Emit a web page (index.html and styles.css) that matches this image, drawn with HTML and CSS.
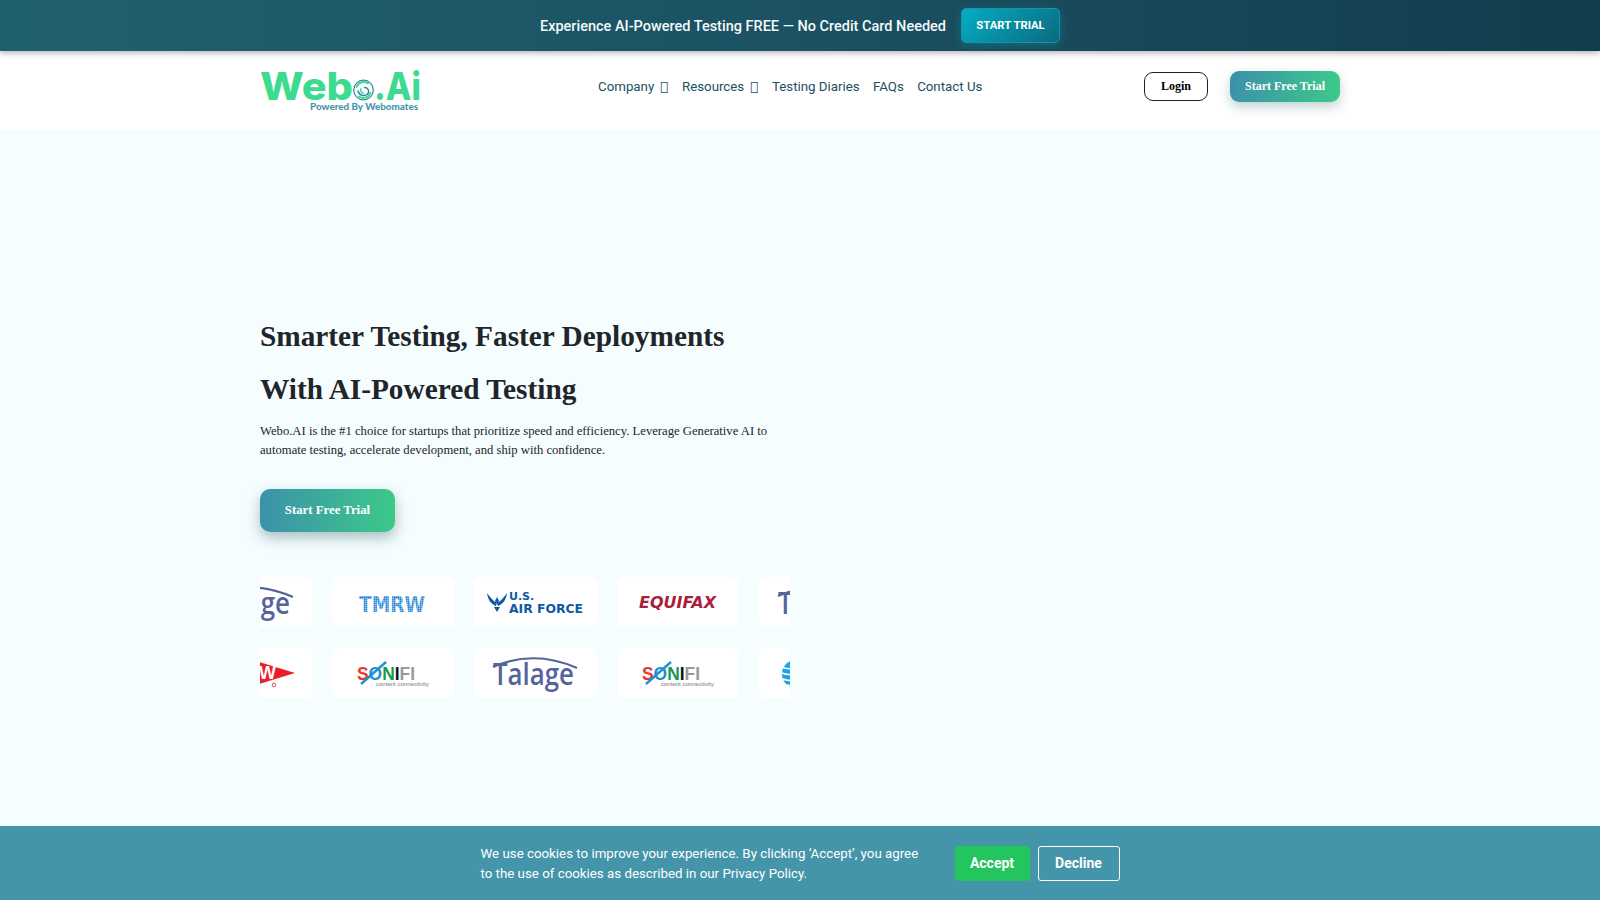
FILE: index.html
```html
<!DOCTYPE html>
<html lang="en">
<head>
<meta charset="utf-8">
<title>Webo.AI</title>
<link rel="stylesheet" href="styles.css">
</head>
<body>
<div class="promo">
  <span class="promo-text">Experience AI-Powered Testing FREE — No Credit Card Needed</span>
  <a class="promo-btn" href="#">START TRIAL</a>
</div>
<header class="site-header">
  <div class="container header-inner">
    <a class="logo" href="#" aria-label="Webo.Ai">
      <svg class="logo-svg" viewBox="0 0 164 44" width="164" height="44">
        <text class="logo-main" x="0" y="31" textLength="93" lengthAdjust="spacingAndGlyphs">Web</text>
        <g class="swirl" fill="none" stroke-linecap="round">
          <circle class="sw-blue" cx="103.500" cy="21" r="9.800"/>
          <path class="sw-green" d="M96.500 18a7.500 7.500 0 0 1 11.500-3.500"/>
          <path class="sw-green" d="M110.500 24a7.500 7.500 0 0 1-11.500 3.500"/>
          <path class="sw-blue2" d="M98 22a5.800 5.800 0 0 0 9.500 3a3.800 3.800 0 0 0-3-6.500"/>
          <path class="sw-green2" d="M103.500 24a3 3 0 0 1-2.500-4.500"/>
        </g>
        <text class="logo-main" x="114" y="31" textLength="47" lengthAdjust="spacingAndGlyphs">.Ai</text>
        <text class="logo-sub" x="50" y="41" textLength="108" lengthAdjust="spacingAndGlyphs">Powered By Webomates</text>
      </svg>
    </a>
    <nav class="nav-links">
      <a href="#">Company <span class="caret">&#xf107;</span></a>
      <a href="#">Resources <span class="caret">&#xf107;</span></a>
      <a href="#">Testing Diaries</a>
      <a href="#">FAQs</a>
      <a href="#">Contact Us</a>
    </nav>
    <div class="actions">
      <a class="btn-login" href="#">Login</a>
      <a class="btn-grad btn-small" href="#">Start Free Trial</a>
    </div>
  </div>
</header>
<main class="hero">
  <div class="container">
    <div class="hero-col">
      <h1>Smarter Testing, Faster Deployments<br>With AI-Powered Testing</h1>
      <p>Webo.AI is the #1 choice for startups that prioritize speed and efficiency. Leverage Generative AI to automate testing, accelerate development, and ship with confidence.</p>
      <a class="btn-grad btn-large" href="#">Start Free Trial</a>
      <div class="logos">
        <div class="logo-row">
          <div class="card"><svg viewBox="0 0 122 50"><text class="talage" x="19" y="37" textLength="81" lengthAdjust="spacingAndGlyphs">Talage</text><path class="talage-arc" d="M19 19Q60 1 103 20"/></svg></div>
          <div class="card"><svg viewBox="0 0 122 50"><defs><pattern id="dots" width="2" height="2" patternUnits="userSpaceOnUse"><rect width="1.700" height="1.700" fill="#1f80d6"/></pattern></defs><text class="tmrw" x="27" y="35" textLength="66" lengthAdjust="spacingAndGlyphs">TMRW</text></svg></div>
          <div class="card"><svg viewBox="0 0 122 50"><path class="usaf" d="M13 16c1 7 4 11 9 13l1-3c-4-2-7-6-10-10zM33 16c-1 7-4 11-9 13l-1-3c4-2 7-6 10-10zM23 20l2 4-2 3-2-3zM20 30h6l-3 5z"/><text class="usaf-a" x="35" y="23">U.S.</text><text class="usaf-b" x="35" y="36" textLength="74" lengthAdjust="spacingAndGlyphs">AIR FORCE</text></svg></div>
          <div class="card"><svg viewBox="0 0 122 50"><text class="equifax" x="22" y="31" textLength="77" lengthAdjust="spacingAndGlyphs">EQUIFAX</text></svg></div>
          <div class="card"><svg viewBox="0 0 122 50"><text class="talage" x="19" y="37" textLength="81" lengthAdjust="spacingAndGlyphs">Talage</text><path class="talage-arc" d="M19 19Q60 1 103 20"/></svg></div>
        </div>
        <div class="logo-row">
          <div class="card"><svg viewBox="0 0 122 50"><polygon class="arrow" points="30,2 105,25 30,48"/><text class="arrow-t" x="86" y="31" text-anchor="end">ARROW</text><circle class="arrow-r" cx="84" cy="37" r="1.800"/></svg></div>
          <div class="card"><svg viewBox="0 0 122 50"><text class="sonifi" x="25" y="32" textLength="58" lengthAdjust="spacingAndGlyphs"><tspan class="s-red">S</tspan><tspan class="s-blue">O</tspan><tspan class="s-green">N</tspan><tspan class="s-black">I</tspan><tspan class="s-gray">FI</tspan></text><path class="s-slash" d="M29 36L54 14"/><text class="s-sub" x="44" y="38" textLength="53" lengthAdjust="spacingAndGlyphs">content connectivity</text></svg></div>
          <div class="card"><svg viewBox="0 0 122 50"><text class="talage" x="19" y="37" textLength="81" lengthAdjust="spacingAndGlyphs">Talage</text><path class="talage-arc" d="M19 19Q60 1 103 20"/></svg></div>
          <div class="card"><svg viewBox="0 0 122 50"><text class="sonifi" x="25" y="32" textLength="58" lengthAdjust="spacingAndGlyphs"><tspan class="s-red">S</tspan><tspan class="s-blue">O</tspan><tspan class="s-green">N</tspan><tspan class="s-black">I</tspan><tspan class="s-gray">FI</tspan></text><path class="s-slash" d="M29 36L54 14"/><text class="s-sub" x="44" y="38" textLength="53" lengthAdjust="spacingAndGlyphs">content connectivity</text></svg></div>
          <div class="card"><svg viewBox="0 0 122 50"><circle class="att" cx="37" cy="26" r="14"/><path class="att-l" d="M23 19Q32 24 44 14M23 25Q34 30 49 19M24 31Q36 36 50 25M28 37Q38 39 48 33"/></svg></div>
        </div>
      </div>
    </div>
  </div>
</main>
<div class="cookie">
  <p class="cookie-text">We use cookies to improve your experience. By clicking ‘Accept’, you agree to the use of cookies as described in our Privacy Policy.</p>
  <div class="cookie-btns">
    <a class="accept" href="#">Accept</a>
    <a class="decline" href="#">Decline</a>
  </div>
</div>
</body>
</html>
```
FILE: styles.css
```css
* { box-sizing: border-box; }
html, body { margin: 0; height: 100%; }
body {
  overflow: hidden;
  background: #f5fdff;
  font-family: "Liberation Serif", serif;
  color: #212529;
}
a { text-decoration: none; }
.container { width: 1080px; margin: 0 auto; }

.promo {
  height: 51px;
  display: flex;
  align-items: center;
  justify-content: center;
  gap: 15px;
  background: linear-gradient(90deg, #21606f 0%, #1b5163 50%, #113c4c 100%);
  box-shadow: 0 2px 6px rgba(0, 0, 0, .3);
  position: relative;
  z-index: 2;
}
.promo-text { margin-top: 2px; color: #f3fafb; font: 500 14.500px Roboto, sans-serif; }
.promo-btn {
  width: 99px;
  height: 35px;
  display: flex;
  align-items: center;
  justify-content: center;
  color: #fff;
  font: 700 11.300px Roboto, sans-serif;
  border: 1px solid #1a93a8;
  border-radius: 5px;
  background: linear-gradient(135deg, #02aec3 0%, #0c6a80 100%);
  box-shadow: 0 2px 8px rgba(2, 174, 195, .35);
}

.site-header { height: 79px; background: #fff; }
.header-inner { height: 79px; display: flex; align-items: center; }
.logo { display: block; width: 164px; height: 44px; }
.logo-svg { display: block; }
.logo-main { font: 800 38px Inter, sans-serif; fill: #3ddb90; }
.logo-sub { font: 900 9px Lato, sans-serif; fill: #4795ac; }
.sw-blue { stroke: #2f8aa6; stroke-width: 1.2; }
.sw-green { stroke: #3ddb90; stroke-width: 2; }
.sw-blue2 { stroke: #2f8aa6; stroke-width: 1.5; }
.sw-green2 { stroke: #3ddb90; stroke-width: 1.4; }

.nav-links {
  margin: 0 0 9px 174px;
  display: flex;
  gap: 13.300px;
  font: 400 13.300px Roboto, sans-serif;
}
.nav-links a { color: #1b4f5e; }
.caret { margin: 0 .8px 0 2.500px; font-family: "DejaVu Sans", sans-serif; font-size: 13px; }
.actions { margin: 0 0 8px auto; display: flex; align-items: center; gap: 22px; }
.btn-login {
  width: 64px;
  height: 29px;
  display: flex;
  align-items: center;
  justify-content: center;
  color: #000;
  background: #fff;
  border: 1px solid #222;
  border-radius: 9px;
  font-weight: 700;
  font-size: 12px;
}
.btn-grad {
  display: flex;
  align-items: center;
  justify-content: center;
  color: #fff;
  font-weight: 700;
  background: linear-gradient(90deg, #3c91aa 0%, #3dc98a 100%);
}
.btn-small {
  width: 110px;
  height: 31px;
  font-size: 12px;
  border-radius: 9px;
  box-shadow: 0 5px 12px rgba(40, 110, 100, .3);
}

.hero-col { width: 530px; padding-top: 180px; }
h1 {
  margin: 0;
  font-size: 29.300px;
  line-height: 53px;
  font-weight: 700;
}
.hero-col p {
  margin: 5.500px 0 0;
  font-size: 12.660px;
  line-height: 19.400px;
}
.btn-large {
  width: 135px;
  height: 43px;
  margin-top: 28.500px;
  font-size: 12.800px;
  border-radius: 10px;
  box-shadow: 0 6px 14px rgba(30, 80, 80, .35);
}
.logos { margin-top: 45.500px; overflow: hidden; display: flex; flex-direction: column; gap: 21px; }
.logo-row { display: flex; gap: 20px; margin-left: -70.400px; }
.card {
  flex: 0 0 122.400px;
  height: 50px;
  background: #fff;
  border-radius: 6px;
}
.card svg { display: block; width: 122px; height: 50px; }

.talage { font: 600 30px "Open Sans", sans-serif; fill: #56649c; }
.talage-arc { fill: none; stroke: #56649c; stroke-width: 2.200; }
.tmrw { font: 700 21px "DejaVu Sans", sans-serif; fill: url(#dots); }
.usaf { fill: #0f5aa5; }
.usaf-a { font: 700 11px "DejaVu Sans", sans-serif; fill: #0f5aa5; }
.usaf-b { font: 700 12px "DejaVu Sans", sans-serif; fill: #0f5aa5; }
.equifax { font: italic 700 15px "DejaVu Sans", sans-serif; fill: #a91e3c; }
.arrow { fill: #ea1c2d; }
.arrow-t { font: 700 18px "Liberation Sans", sans-serif; fill: #fff; }
.arrow-r { fill: none; stroke: #ea1c2d; stroke-width: .8; }
.sonifi { font: 700 18px "Liberation Sans", sans-serif; }
.s-red { fill: #e8392f; }
.s-blue { fill: #1d92cf; }
.s-green { fill: #169a4b; }
.s-black { fill: #111; }
.s-gray { fill: #9a9a9a; }
.s-slash { stroke: #1d92cf; stroke-width: 2.400; }
.s-sub { font: 400 5px "Liberation Sans", sans-serif; fill: #777; }
.att { fill: #1ba3dd; }
.att-l { fill: none; stroke: #fff; stroke-width: 1.500; }

.cookie {
  position: fixed;
  left: 0;
  right: 0;
  bottom: 0;
  height: 74px;
  background: #4495a9;
  display: flex;
  align-items: center;
  justify-content: center;
  gap: 28px;
}
.cookie-text {
  width: 446px;
  margin: 1px 0 0;
  color: #fff;
  font: 400 13.300px/20px Roboto, sans-serif;
}
.cookie-btns { display: flex; gap: 8px; font: 700 14px Roboto, sans-serif; }
.accept, .decline {
  height: 35px;
  display: flex;
  align-items: center;
  justify-content: center;
  color: #fff;
  border-radius: 3px;
}
.accept { width: 75px; background: #22c55e; }
.decline { width: 82px; border: 1px solid #fff; }
```
